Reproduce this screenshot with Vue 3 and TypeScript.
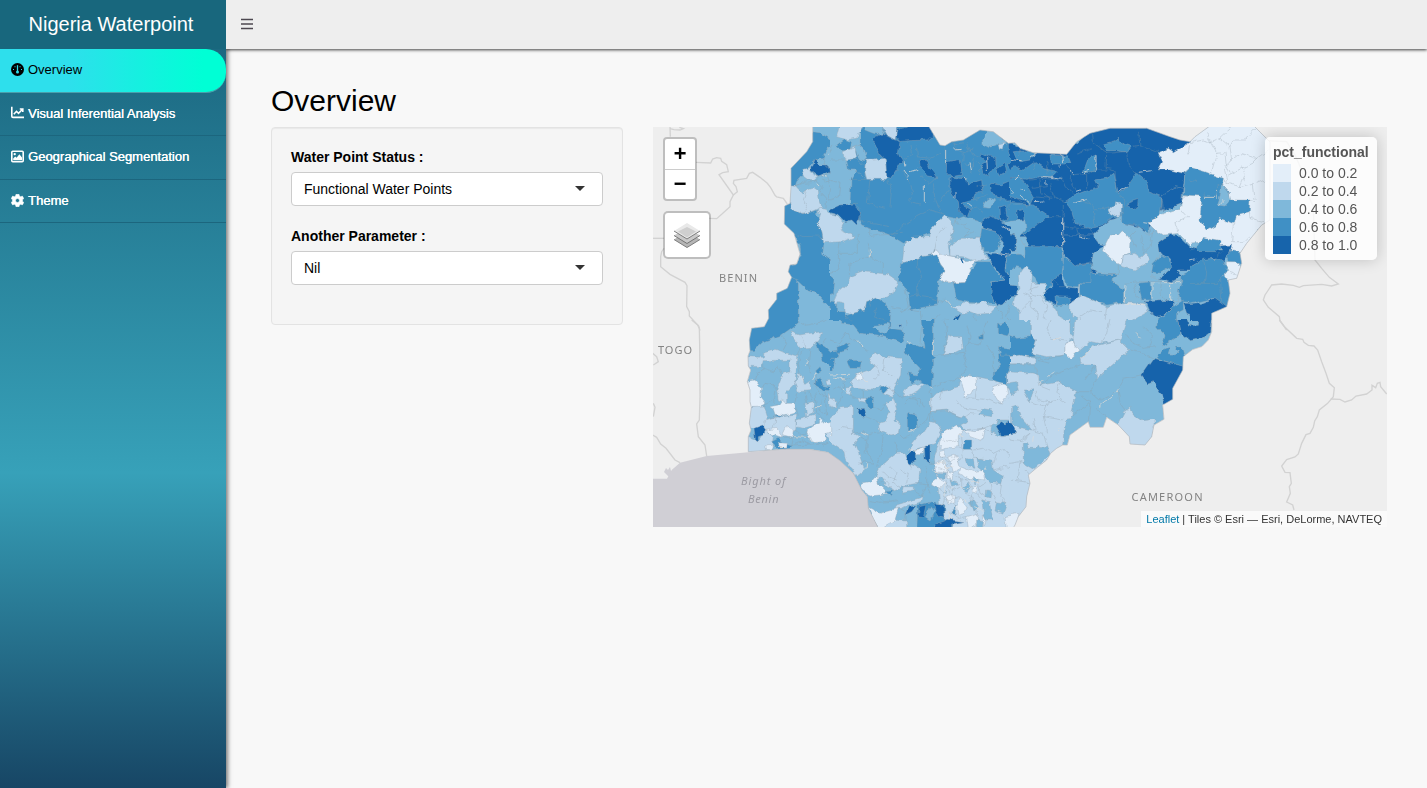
<script setup lang="ts">
type Sheet = { x: number; y: number; areas: string[]; seams: string[]; gaps: string[] }

const shades: string[] = ['#e3eef9', '#bfd8ed', '#7fb8da', '#4090c5', '#1764ab']
const classes: string[] = ['0.0 to 0.2', '0.2 to 0.4', '0.4 to 0.6', '0.6 to 0.8', '0.8 to 1.0']

/* Each map sheet has its own origin; units are thirds of a pixel.
   An area is "shade|points". */
const sheets: Sheet[] = [
  {
    x: 650, y: 120,
    areas: [
      '3|488,38 515,42 530,50 545,60 558,55 545,75 530,90 520,115 500,120 490,125 470,150 440,185 436,197 415,200 415,145 460,95 480,65',
      '1|555,45 580,40 580,60 556,62',
      '4|493,120 512,135 535,135 538,155 525,160 505,168 480,150',
      '1|462,148 480,143 485,160 503,168 492,180 472,178 455,165',
      '1|415,198 440,198 460,220 470,210 490,205 505,215 508,240 515,260 495,270 460,284 421,265',
      '1|505,262 525,265 540,280 580,290 580,365 520,368 515,330 500,310 510,300 515,280 502,275',
      '3|395,258 420,250 421,265 460,284 500,270 500,285 512,298 500,310 515,330 520,365 515,400 540,420 545,460 548,500 555,580 500,520 475,513 445,485 420,475 405,455 408,435 440,432 452,402 450,375 432,345 395,312',
      '4|538,275 550,264 580,264 580,290 555,285',
      '3|415,472 428,472 445,490 445,605 430,640 300,640 335,620 350,570 375,520',
      '1|558,510 580,500 580,545 555,580 548,545'
    ],
    seams: [
      '432,340 460,350 510,348 518,355', '436,197 460,185 480,180 500,182', '470,210 460,240 472,262 460,284',
      '500,182 520,200 512,215 530,235 528,262', '488,180 500,165 520,170 540,150', '520,115 530,140 550,145 570,120',
      '430,200 455,190 490,188 515,165 545,160', '530,170 540,200 535,230 548,260', '516,180 530,185 550,178 570,182',
      '540,420 560,415 570,410', '430,630 450,610 490,620', '555,580 570,590'
    ],
    gaps: ['500,188 512,200', '538,100 548,100', '516,165 528,172', '548,160 552,185']
  },
  {
    x: 830, y: 120,
    areas: [
      '3|90,10 580,10 580,310 455,310 350,290 300,340 220,370 180,345 95,315 60,250 63,178 80,150 50,120 60,90 90,75',
      '1|30,10 100,10 80,55 50,60 20,50',
      '3|20,75 40,60 65,68 60,90 35,92',
      '2|60,85 90,75 100,85 110,115 100,125 85,115 78,90',
      '1|40,95 75,82 80,110 60,125 42,115',
      '3|50,120 80,115 105,140 105,178 80,150 55,150',
      '2|100,10 150,10 165,45 130,40 105,30',
      '1|150,10 205,10 195,60 170,45',
      '1|107,120 130,120 165,115 172,170 165,178 110,178 104,150',
      '4|135,50 160,42 190,58 210,65 205,100 215,125 185,175 170,172 168,120 150,105 135,70 125,62',
      '4|200,30 215,25 298,10 312,45 295,60 240,62 210,65 197,50',
      '4|268,125 290,120 300,145 320,172 295,168 270,140',
      '4|350,125 390,118 397,165 365,170 349,155',
      '4|360,170 410,178 412,192 455,180 458,215 435,222 430,240 395,250 422,265 412,290 388,275 385,245 360,210',
      '2|455,70 470,30 495,30 530,70 508,78 505,70 475,80',
      '1|505,75 525,70 520,90 508,88',
      '4|535,65 580,70 580,110 545,118 535,95',
      '4|455,100 475,108 497,112 498,140 475,168 458,155 455,135 470,125 450,110',
      '4|500,145 525,130 530,155 508,168', '4|535,135 552,130 555,145 545,150',
      '4|480,190 510,195 545,180 580,175 580,235 530,240 500,235 485,215',
      '2|465,245 480,235 497,240 478,265 460,262',
      '4|510,260 525,255 533,300 512,305',
      '2|515,310 580,295 580,345 550,330',
      '4|0,275 30,255 75,252 92,290 80,315 65,300 45,305 25,285',
      '1|-5,280 20,285 40,310 30,330 75,350 40,365 -5,367',
      '1|345,283 365,305 370,325 355,380 360,408 320,405 310,385 305,405 260,415 228,438 218,420 222,375 245,352 300,350 300,330',
      '2|375,300 400,290 440,300 458,315 450,355 410,355 365,378 370,325',
      '1|360,378 395,355 450,355 455,390 475,415 435,425 400,410 360,408',
      '0|305,400 315,385 330,402 360,408 398,415 410,425 437,418 420,445 425,460 405,488 345,488 328,475 345,450 330,430',
      '4|395,415 401,415 399,432 395,428',
      '3|455,325 500,335 515,360 495,395 460,395 450,360',
      '3|530,405 580,400 580,490 545,480 527,450',
      '4|455,305 480,288 505,300 550,330 558,340 557,395 530,405 525,450 545,480 565,500 563,525 500,558 480,525 485,485 525,480 500,450 485,430 470,400 515,400 520,365 498,335 460,325',
      '3|215,430 275,410 320,402 332,435 345,450 325,480 322,555 290,560 240,570 235,515 205,480',
      '3|425,450 440,425 480,425 500,455 525,480 485,485 483,525 495,550 420,548 380,540 370,490 405,488',
      '3|0,455 12,480 8,520 0,530',
      '1|20,520 55,490 60,470 100,455 170,462 203,485 190,520 150,535 110,545 105,570 60,583 45,575 45,550 25,545 10,575 8,560',
      '1|370,565 400,550 440,552 470,542 475,555 500,560 480,580 440,583 420,575 395,580',
      '1|555,535 580,530 580,580 550,570',
      '3|110,545 140,533 165,550 182,575 180,640 60,640 40,590 60,583 105,570',
      '3|-5,545 20,548 20,575 45,575 45,590 60,612 -5,600',
      '4|380,585 390,583 375,612 368,608', '4|205,617 212,615 212,622 206,624',
      '3|275,605 310,600 310,640 280,640', '3|500,640 505,615 525,605 540,620 540,640'
    ],
    seams: [
      '120,178 112,250 130,255 165,265', '63,178 107,178', '172,178 185,210 180,260', '220,155 240,190 250,215 235,245 270,255',
      '270,165 300,190 320,172', '310,190 315,240 330,270', '345,80 347,125', '215,125 245,105 240,75', '260,80 262,110 300,115 330,100',
      '375,70 380,90 410,100 430,85', '400,100 398,125', '430,110 425,160', '440,200 470,195', '190,345 215,320 260,290 300,270 345,283',
      '85,255 90,300 125,310 180,320', '120,320 118,350 150,345 215,340', '30,365 25,410 30,450 0,460', '85,345 85,400 30,400',
      '120,410 160,430 160,460', '115,370 120,410 60,430 58,465', '320,490 350,485 380,490', '262,415 262,440 275,470 262,495 265,530',
      '235,530 262,525 295,530 320,540', '225,510 235,560 210,575', '320,545 345,540 370,560', '180,560 240,570 270,575',
      '270,570 275,605 310,600 330,580', '140,560 130,590 182,605', '45,590 60,600 110,610', '310,390 320,350 345,320',
      '330,602 360,600 390,630', '430,583 440,610 420,630', '500,560 520,580 510,610', '540,550 530,590 550,610',
      '405,320 420,330 400,350 440,335', '375,300 385,315 410,310', '330,245 355,210', '60,250 85,250', '0,120 40,120', '10,75 0,95',
      '120,560 125,540', '0,180 30,190 25,230 0,240', '415,270 440,260 460,275', '430,240 470,225', '540,240 535,270 570,275',
      '410,70 420,100 445,110', '440,125 455,140 445,165', '395,130 425,135', '350,60 375,75 400,68'
    ],
    gaps: ['283,192 283,248', '347,90 347,130', '225,150 235,165 232,180', '222,120 225,140', '118,388 118,412', '378,215 378,235', '515,320 545,335',
      '500,400 530,405', '400,175 412,178', '240,155 262,148', '545,210 548,218 562,214', '545,200 558,215', '350,540 372,565', '370,90 395,88', '470,110 472,150', '420,130 425,150', '415,250 430,262']
  },
  {
    x: 1010, y: 120,
    areas: [
      '4|0,60 30,80 170,95 240,30 300,10 410,10 500,50 540,55 525,160 515,250 455,270 415,330 380,350 245,465 200,435 160,380 60,385 45,350 0,350',
      '3|10,95 60,92 75,100 60,120 30,125 15,110',
      '3|15,140 40,150 75,125 100,145 140,155 125,170 90,170 50,178 0,170 0,155',
      '3|120,105 175,108 182,125 165,135 125,135',
      '3|0,180 30,170 50,195 70,230 60,255 40,240 0,225',
      '3|0,250 70,255 120,290 85,310 45,345 0,300',
      '4|20,270 40,265 42,300 22,300',
      '2|0,305 45,300 48,330 30,350 50,385 50,415 30,405 15,385 18,345 0,335',
      '4|0,340 18,345 15,390 0,395',
      '3|45,380 155,380 160,435 155,465 130,480 115,510 95,510 60,450 20,440 0,460 0,400 30,400 45,415',
      '3|160,410 200,438 247,430 247,465 240,490 210,488 205,500 175,500 160,465',
      '3|280,75 315,65 325,52 335,70 368,80 345,95 320,92 290,92',
      '3|220,155 235,115 258,105 258,155',
      '3|165,245 195,225 235,210 265,200 255,180 290,175 312,160 325,220 345,210 380,160 410,185 415,215 455,230 455,250 450,290 415,305 418,340 380,315 330,310 310,290 270,320 240,325 195,310 185,270',
      '4|355,245 385,235 383,260 370,270 352,260',
      '2|245,350 270,325 300,300 335,290 335,310 385,320 415,345 450,330 478,330 480,345 450,365 450,400 430,440 425,470 460,485 515,480 505,545 430,550 345,550 340,510 305,480 325,465 270,462 245,445',
      '1|293,265 318,258 320,245 335,250 333,290 320,292 300,280',
      '4|160,345 250,345 260,370 285,375 250,400 245,425 195,438 160,405',
      '0|285,375 300,345 325,345 337,332 360,360 358,400 340,405 335,435 318,430 280,395',
      '1|340,405 370,400 395,412 405,402 417,415 410,430 375,450 335,440',
      '0|455,95 475,85 490,95 540,65 580,25 580,150 545,140 520,160 480,150 445,150 458,125 445,100',
      '3|525,160 545,138 580,155 580,235 520,225',
      '4|455,225 500,200 518,205 515,250 460,272',
      '0|415,310 460,280 510,265 520,228 580,230 580,370 545,380 505,340 460,345 430,325',
      '4|445,370 480,345 510,350 545,385 580,390 580,420 555,450 500,450 515,470 485,485 445,475 480,450 485,420 450,400',
      '3|430,430 455,405 480,415 485,440 450,460 425,455',
      '3|515,465 545,450 580,445 580,550 515,545 505,510 515,485',
      '3|240,460 325,465 305,480 340,510 340,545 290,555 260,545 210,525 205,490 240,490',
      '3|385,490 420,485 425,540 395,540',
      '4|125,480 155,460 165,500 205,505 203,550 190,555 140,530 135,555 95,525 125,500',
      '3|135,530 180,532 182,555 138,557',
      '1|25,470 45,440 68,455 65,490 110,490 110,510 95,530 140,565 145,590 170,600 160,640 30,640 30,580 10,555 15,525 30,510',
      '4|0,490 22,495 20,525 0,530',
      '1|180,550 215,525 260,545 290,560 330,548 400,550 415,575 370,600 355,640 195,640 200,595 180,575',
      '4|405,545 490,540 490,560 465,585 440,590 415,570',
      '3|490,560 520,540 520,570 500,580 500,640 440,640 445,595 465,585',
      '4|520,550 580,550 580,640 510,640 530,600 565,605 560,590 530,580'
    ],
    seams: [
      '385,25 390,75 365,80', '248,40 250,70 290,100 350,95', '290,100 288,145 315,150 320,215', '350,95 355,135 380,158', '390,75 445,95',
      '200,100 245,85', '185,165 230,160 230,215', '155,170 165,200 190,220', '60,180 100,175 150,180', '90,180 95,220 120,240',
      '120,190 130,230 165,245', '65,205 110,200', '70,230 125,235', '110,165 115,120', '455,230 455,270',
      '160,255 158,410', '115,290 160,290', '160,320 200,325 240,325', '240,325 250,345', '200,325 205,345 240,360', '230,240 260,270 300,260',
      '250,270 255,320', '210,240 245,255', '325,220 350,205', '335,290 345,240 325,225', '385,320 360,345 380,385', '395,345 400,400',
      '430,325 420,380 400,400', '325,435 325,465', '345,490 385,485 425,485 515,485', '380,490 370,520 395,540', '455,485 450,520 470,545',
      '130,480 150,500 165,500', '40,520 65,530 60,560 85,580 80,620', '65,490 60,520 90,530', '90,530 110,560 100,590 120,630',
      '290,560 285,600 300,630', '215,630 210,590 240,570 275,575', '540,65 535,95 545,110', '510,265 530,290 545,290',
      '505,340 495,310 530,290', '530,100 550,110 570,100', '205,435 247,432', '55,510 85,500', '30,575 60,545',
      '30,85 25,110', '75,130 70,150', '165,135 185,150 180,180 195,210', '20,235 55,260', '235,165 250,150 290,150'
    ],
    gaps: ['346,553 402,553', '258,106 258,155', '426,488 426,536', '482,488 482,542', '158,292 158,345', '158,350 158,375', '208,490 206,522', '345,492 343,545', '190,250 230,238',
      '108,180 108,196', '220,155 240,148', '0,205 10,215 5,222', '15,180 30,165', '0,118 35,122', '155,100 158,130 150,140', '325,215 352,200', '385,157 425,152', '400,305 420,308', '205,350 235,358', '430,488 510,488', '35,205 48,215', '95,170 130,172', '72,245 100,243',
      '60,110 80,100', '180,150 190,165', '125,170 155,175', '30,225 60,250', '195,215 210,210']
  },
  {
    x: 1190, y: 120,
    areas: [
      '0|-5,60 60,10 210,10 250,70 250,300 215,320 170,375 150,405 125,395 60,365 -5,370',
      '3|-5,138 45,155 97,175 95,190 118,215 120,240 180,240 178,275 140,285 133,312 90,295 75,318 52,330 30,300 35,240 28,228 -5,225',
      '2|95,190 115,215 122,238 105,258 82,255 90,230',
      '4|-5,375 20,385 95,390 85,378 125,375 120,400 100,432 75,415 40,420 -5,450',
      '3|18,385 38,352 93,362 92,385 80,395 25,395',
      '3|122,392 165,400 155,433 118,425 112,410',
      '0|112,425 135,425 155,440 150,475 115,485 100,460 112,455',
      '3|-5,450 40,418 80,415 112,435 100,470 122,490 120,540 115,562 90,550 70,535 -5,555',
      '4|-5,555 35,550 75,533 115,562 70,578 70,640 -5,640',
      '2|-5,600 25,603 25,618 -5,618'
    ],
    seams: [
      '0,68 40,60 62,68 90,55 125,22', '62,68 80,100 65,155', '90,55 120,80 130,60 165,60 200,22', '120,80 125,120 105,140 115,190 95,175',
      '125,120 150,100 200,115 235,90', '115,190 150,200 190,190 195,240', '115,165 165,140 185,130 200,115', '150,200 165,165 155,140',
      '178,275 180,295 240,310', '130,312 125,365 160,365', '165,365 180,350', '40,418 50,460 45,490 0,490', '100,470 80,490 45,490',
      '95,545 92,480', '110,455 140,465', '0,180 20,185', '40,215 45,232 75,232 80,200 95,190', '62,68 50,40', '80,100 105,98 108,130 120,160',
      '180,240 195,245', '200,190 225,180', '75,415 95,395', '18,385 0,390'
    ],
    gaps: ['42,232 72,232', '85,258 100,240', '0,423 20,418', '80,210 78,240']
  },
  {
    x: 650, y: 320,
    areas: [
      '3|348,-10 445,-10 445,8 430,20 395,45 340,65 310,92 290,92 290,60 300,20 343,18',
      '1|420,35 450,45 515,35 505,60 485,82 450,85 435,60',
      '3|497,65 525,80 540,95 580,85 580,110 555,125 548,150 520,125',
      '1|285,110 340,112 342,95 375,88 440,108 440,135 435,190 410,215 410,250 385,240 380,210 400,160 420,155 420,120 340,122 335,140 285,138',
      '0|285,185 315,180 335,205 333,230 348,250 325,262 290,258',
      '1|290,260 340,258 350,290 345,320 320,330 290,320',
      '1|345,300 375,292 440,285 437,330 400,350 345,330',
      '1|285,345 325,362 345,330 370,350 365,385 340,400 285,400',
      '0|358,260 385,255 395,240 410,250 435,250 438,278 400,288 375,283 370,268',
      '3|370,285 392,286 385,292',
      '4|312,325 338,315 348,330 340,345 325,350 325,362 316,358',
      '0|345,332 380,325 395,345 395,352 365,342', '0|398,345 410,320 430,330 428,352',
      '1|440,300 495,285 495,315 460,325 440,320',
      '1|525,340 548,320 580,300 580,375 545,365',
      '0|470,335 490,320 505,310 512,295 528,310 545,305 545,335 525,340 530,360 500,365 480,360',
      '3|365,365 385,355 400,370 425,378 420,385 385,388', '0|385,368 412,370 410,382 388,380', '0|348,378 368,375 362,390 348,388',
      '1|435,190 445,160 460,170 465,190 480,180 482,212 445,215',
      '1|465,250 490,245 490,280 470,290',
      '3|495,185 510,175 520,200 545,205 545,212 520,210 495,195', '3|500,150 507,143 512,152 505,158',
      '1|528,180 580,175 580,190 530,195', '1|535,220 545,235 545,262 538,255'
    ],
    seams: [
      '445,0 470,15 500,10 530,0', '395,45 410,70 400,90', '440,108 450,85', '340,122 342,145 370,155 385,140 398,170', '335,205 345,190 370,195 385,215',
      '342,145 320,165 315,180', '455,95 445,130 450,165', '480,85 475,130 482,160', '500,160 495,200 515,225', '515,225 540,235 550,270',
      '440,220 435,250 445,290', '465,215 470,250', '495,220 500,280 520,295', '350,290 375,292', '375,292 370,325', '340,258 365,245',
      '435,330 455,345 470,335', '395,352 470,350 500,365', '425,378 480,375 540,370', '515,235 510,270 530,285', '525,215 530,290', '480,215 485,240',
      '455,50 465,80', '430,355 425,378 460,362 480,375', '500,365 520,378 545,365', '375,210 370,240 385,255', '530,55 520,70'
    ],
    gaps: ['475,120 467,138', '490,260 515,260', '548,163 570,163', '540,185 570,183', '500,155 485,180', '432,350 470,352', '388,380 410,380', '450,165 462,185']
  },
  {
    x: 830, y: 320,
    areas: [
      '3|35,-5 180,-5 180,25 215,30 225,60 215,68 140,45 90,40 70,15 35,10',
      '2|130,20 175,10 180,30 155,42', '4|204,16 212,14 210,22',
      '3|275,-5 310,-5 310,105 318,112 308,120 308,205 265,180 245,190 235,158 262,165 270,145 222,95 230,70 260,75 285,85 280,50',
      '1|355,45 365,50 395,50 400,85 370,100 340,105',
      '3|505,15 525,5 545,30 535,48 505,40', '3|448,50 460,46 460,58 450,58',
      '3|0,95 30,90 25,115 0,115', '3|20,85 60,70 50,90 25,98', '3|50,120 95,122 90,145 60,145', '3|0,115 15,115 10,150 0,150',
      '1|115,120 135,98 165,110 215,115 212,165 190,210 150,195 130,210 75,205 60,185 75,165 120,150 135,135',
      '0|72,170 90,160 100,172 85,182', '1|50,200 65,200 60,225 50,220', '1|80,235 108,235 108,250 85,245',
      '3|148,205 160,195 175,205 160,222', '1|160,222 178,205 195,210 185,232',
      '1|220,225 240,195 285,190 260,215 235,228',
      '3|108,235 130,235 130,262 115,265', '4|80,268 100,265 108,290 98,292',
      '1|35,260 70,258 70,340 90,350 75,370 85,395 100,440 105,450 80,470 50,425 45,395 -5,355 -5,310',
      '0|-5,315 5,320 5,345 -5,350', '1|0,230 15,240 20,262 5,265',
      '1|165,250 190,235 200,265 195,300 210,310 205,340 180,345 150,335 145,310 165,305 180,275',
      '3|232,280 260,285 262,325 232,333',
      '1|245,370 265,345 290,330 300,305 330,308 335,330 315,370 290,380 260,385 240,400',
      '4|228,410 245,395 257,395 255,425 240,432', '4|283,378 300,378 300,430 285,420', '0|258,390 282,380 280,402 258,405',
      '1|300,240 320,220 385,200 390,175 400,168 440,170 490,180 545,210 540,240 580,250 580,290 540,300 500,300 500,320 480,340 440,330 410,330 385,310 400,295 350,270 300,275',
      '0|388,175 405,165 438,170 440,205 405,232 400,205', '0|488,200 530,190 535,220 512,255 485,215',
      '2|530,190 550,185 568,195 565,220 545,222', '1|525,160 550,150 580,155 580,190 530,190', '1|538,115 580,108 580,132 545,130',
      '2|300,275 350,272 385,290 400,290 412,305 380,320 340,335 320,310', '2|455,265 488,270 485,290 450,285',
      '3|505,105 535,95 545,130 530,160 530,195 490,180 490,155 510,140', '3|505,80 512,105 580,108 580,75 540,85',
      '1|400,330 460,325 515,350 560,345 580,330 580,580 545,590 525,640 310,640 345,600 330,560 320,470 310,420 330,360 380,330',
      '2|540,290 570,270 580,300 570,330 545,305', '2|485,315 505,305 525,315 500,330 480,345',
      '4|498,318 515,308 525,315 538,302 560,330 555,345 515,348',
      '0|335,340 380,315 400,330 385,350 385,380 350,385 330,390', '0|400,330 435,335 465,325 455,362 420,350',
      '3|405,360 425,360 425,388 402,388', '0|312,430 335,422 355,440 350,460 318,455', '0|350,410 380,405 390,440 370,460 362,430',
      '0|300,490 325,470 345,490 330,505', '0|390,440 430,455 460,450 463,480 420,475 385,460', '0|330,395 348,390 345,410 328,412',
      '2|405,415 430,420 435,445 415,440', '2|440,415 485,420 490,450 520,470 515,488 480,485 450,450',
      '2|360,480 380,485 385,495 365,498', '2|395,505 415,490 425,500 410,520', '2|500,545 530,550 520,580 495,570', '2|455,540 478,545 488,600 465,600',
      '2|320,460 345,462 345,475 325,475', '2|340,515 350,512 348,522', '2|470,510 482,512 480,535 468,530',
      '1|150,440 200,400 225,398 235,430 270,445 265,490 235,495 190,510 150,490 135,470',
      '2|150,470 165,490 150,495 140,480', '0|90,490 120,485 138,465 145,490 175,520 150,525 120,528 95,510',
      '3|165,515 190,512 180,525', '1|200,555 280,530 275,545 225,560 195,570', '1|215,520 220,500 250,500 250,512',
      '0|115,562 150,580 205,565 195,600 155,640 135,610', '1|160,620 200,598 230,600 230,640 155,640',
      '3|260,555 310,545 345,555 345,600 370,605 365,640 260,640 262,590', '2|285,590 300,560 312,575 300,600',
      '4|225,585 235,560 258,558 245,575', '4|268,560 288,555 280,590 265,588', '4|312,552 340,552 345,595 325,590 315,575',
      '4|315,612 355,598 405,605 365,612 365,635 315,635', '3|365,580 378,555 375,585',
      '0|380,560 392,530 412,565 405,580 385,585', '0|410,590 445,580 445,610 415,625', '0|525,590 580,575 580,640 530,640',
      '0|350,530 370,520 375,545 358,550', '0|430,500 445,500 440,520 425,515',
      '2|415,545 430,540 445,560 430,575', '2|440,600 460,605 455,640 440,640', '2|430,470 445,478 435,492', '0|460,580 470,600 462,625', '0|350,455 372,462 365,478 348,472'
    ],
    seams: [
      '215,30 235,10 232,0', '285,85 270,70 275,20', '345,0 350,45 340,105', '310,105 345,105 400,100', '400,100 415,70 450,75 470,0',
      '400,100 410,140 390,170', '310,200 350,185 390,175', '470,75 490,100 490,155', '410,15 420,50 415,70', '0,60 30,70 45,40 90,75 115,95',
      '190,210 205,230 230,225', '165,110 160,150 190,170', '135,135 150,160 130,180', '70,340 100,335 115,345 150,335', '115,345 110,390 130,430',
      '90,350 110,360 105,400', '205,340 220,355 245,345', '160,345 155,390 140,440', '195,365 200,400', '300,210 305,240 298,300',
      '262,325 290,300 300,275', '340,205 330,240', '440,205 435,235 400,232', '435,235 480,240 512,255', '380,240 400,265 450,270',
      '400,295 420,280 450,285', '440,330 460,325 485,315', '130,262 150,270 165,250', '108,290 130,300 145,310', '240,235 260,240 270,260',
      '220,255 240,232 270,235 285,265', '430,390 460,385 490,400 520,385', '520,385 540,410 570,400', '490,450 530,440 570,450', '515,488 510,530 530,550',
      '480,485 485,520 500,545', '425,388 430,415 460,415', '385,380 402,388', '345,490 370,510 390,500', '370,510 365,540 392,530', '425,520 420,560 445,580',
      '330,505 345,530 335,560', '345,530 380,560', '385,460 395,480 420,475', '440,520 460,540', '410,520 430,530 425,560', '350,460 365,480', '315,440 345,450',
      '330,412 355,425 380,405', '362,430 345,440 355,455', '355,575 385,595 410,590', '300,430 312,430', '265,490 290,495 300,520', '250,512 280,530',
      '180,440 200,460 190,485 210,500', '160,455 175,470 200,480', '210,450 235,460 230,490', '145,490 165,480 190,510', '145,530 165,545 200,540',
      '120,545 150,550 205,545', '205,565 225,575 225,600', '290,440 290,500 275,530', '240,432 245,445', '85,430 105,425 130,430', '20,330 40,320 70,325',
      '10,210 30,200 35,230 20,260', '40,170 45,200 30,210', '100,210 100,235', '60,225 80,235', '35,180 60,175', '450,500 465,490', '500,400 490,430', '560,350 560,400',
      '395,350 400,400 385,425', '340,360 360,365 380,360', '375,470 410,480 430,500', '395,480 395,505', '445,480 450,520 470,530', '345,480 360,520'
    ],
    gaps: ['310,60 310,105', '80,65 100,78', '235,60 245,75', '300,200 310,205', '0,165 60,163', '10,175 45,180', '310,230 300,238', '235,390 282,388', '460,455 470,440',
      '345,490 345,530', '385,345 400,350', '232,335 262,328', '90,150 100,165', '355,570 362,600', '90,335 115,345', '540,120 565,122', '35,205 50,215', '320,430 345,425 350,445 375,440', '100,175 112,188',
      '355,510 370,505', '420,480 450,490', '390,500 410,510 430,498', '430,560 455,570', '400,535 410,545', '310,450 325,460', '110,430 108,450', '185,240 180,245']
  },
  {
    x: 1010, y: 320,
    areas: [
      '3|0,40 20,55 60,50 65,30 80,30 75,110 0,110',
      '1|60,-10 180,-10 180,35 190,55 165,70 165,105 110,110 65,100 80,60 62,40',
      '1|195,-10 355,-10 330,60 270,70 240,65 200,100 190,60',
      '0|165,70 190,60 195,80 210,90 180,118 165,95',
      '1|330,60 360,90 260,175 255,135 215,135 210,120 245,80',
      '1|0,112 30,105 75,115 75,130 0,132',
      '1|-5,150 50,152 85,165 95,195 150,185 198,215 185,285 165,310 158,375 170,385 122,410 85,450 80,640 -5,640',
      '2|-5,132 75,135 85,160 -5,155', '2|-5,190 20,185 25,215 -5,228', '2|40,210 70,210 60,245', '2|5,260 20,255 30,285 65,330 20,320 5,310',
      '4|-5,305 5,310 20,340 -5,342', '2|40,370 50,368 55,385 80,385 85,375 90,385 110,375 120,405 70,448 40,430',
      '0|-5,585 30,580 20,640 -5,640',
      '3|445,-10 500,-10 512,45 455,80 465,45 440,20', '4|500,-10 580,-10 580,60 545,65 510,35', '2|530,0 560,5 550,18 535,15',
      '3|440,115 465,85 480,82 475,100 495,105 505,95 495,82 515,80 530,135 518,140',
      '4|430,115 525,140 525,150 495,205 495,245 465,255 450,215 430,185 415,192 395,165',
      '1|345,270 362,260 370,285 395,302 435,298 435,335 405,380 355,378 350,350 318,325'
    ],
    seams: [
      '120,0 110,30 125,55 170,60', '300,0 290,40 270,70', '350,40 370,70 400,85 440,80', '400,20 430,50 420,80', '360,90 400,100 430,115',
      '95,195 130,165 210,135', '260,175 240,215 198,215', '255,135 225,180', '210,225 240,250 235,305', '240,215 270,240 325,215', '325,215 340,175 395,165',
      '255,265 290,290', '325,215 330,250 345,270', '185,285 210,270 240,250', '75,215 85,240 120,245 110,260 100,290', '100,290 160,300', '110,340 105,310 100,290',
      '50,240 75,250 110,260', '120,245 150,240 165,250', '150,185 140,215 155,240', '65,330 100,340 110,375', '30,360 60,340', '70,295 75,330',
      '30,420 25,480', '0,480 45,485 60,490', '0,430 30,425 45,430', '45,450 60,470', '80,155 90,195', '65,100 80,120 120,130', '375,35 390,50', '0,360 35,365 60,340', '120,210 95,200', '75,110 100,120 165,105'
    ],
    gaps: ['265,260 310,225', '378,40 392,55', '90,190 100,180', '115,170 130,158', '130,60 150,52', '70,350 68,365', '215,115 250,75', '318,220 330,205', '150,325 148,330']
  },
  {
    x: 1190, y: 320,
    areas: ['4|-5,-10 70,-10 62,35 35,55 -5,65', '2|-5,0 25,0 22,16 -5,18'],
    seams: ['-5,0 25,0', '35,55 55,42'],
    gaps: []
  }
]

/* Areas that touch a sheet's left or top edge run past it, so that no border is drawn there. */
const bleed = (n: string) => (Number(n) <= 0 ? '-14' : n)
const split = (s: string) => {
  const [shade, list] = s.split('|')
  const points = list.split(' ').map((p) => p.split(',').map(bleed).join(',')).join(' ')
  return { fill: shades[Number(shade)], points }
}

const outline =
  'M812.7,120V141.7L806.7,151.7 791,168.3V186.7L790,203.3 784.7,206 784.3,224 794,233.3 800,254 796.7,264 790,265 788.3,271.7 791.7,277.3 787.3,288.3 776.7,293.3V299.3L768.3,310 768.7,318.3 764.3,326.7 751.7,328.3 749.3,340 750,350.7 748,356 748.3,366 750.7,370 747.3,381.7 750,390V401.7L751.3,407.3 749.3,423.3 751,430 748.3,436.7V451.7L783,449.3H810L828,452.3 840,460.7 853.3,473.3 861.7,490 867.3,496.7 868.3,508.3 879.3,530H1012L1015,525 1018.3,516.7 1026,506.7 1026.7,496.7 1030,483.3 1028.3,475 1035,469.3 1046.7,460 1050.7,453.3 1056.7,448.3 1062.7,445H1067.3L1070,435 1088.3,421.7 1090,427.3H1103.3L1106.7,417.3 1118.3,425 1129.3,436.7 1130,444 1145,445 1151.7,436.7 1154,425 1164,419.3 1162.7,405 1172.7,399.3V388.3L1182.7,370 1183.3,356.7 1192.7,349.5 1202,346.5 1208.3,340 1211.7,331.7V313.3L1226.7,306.7 1230,293.3 1228.3,280 1236.7,278.3 1241.7,263.3 1240,253.3 1246.7,243.3 1261.7,225 1270,220V142L1255,127V120H1218L1195,136.7 1190,141.7 1180,140 1170,136.7 1146.7,128.3H1110L1090,133.3 1076.7,141.7 1066.7,154.3 1033.3,152.7 1020,148.3 1015,142.7 1008.3,143.3 993.3,131.7 980,130 963.3,140 951.7,141.7 945,145.7 940,145 929.3,127.3V120Z'

const borders: { x: number; y: number; lines: string[] }[] = [
  { x: 650, y: 120, lines: [
    '60,20 61,50', '60,26 72,29 90,30 100,26 88,22', '138,127 182,129 188,117 200,113 212,115 215,124 230,134 235,155 218,158 207,164 250,225 262,215 258,200 250,190 252,181 290,175 298,160 308,157 330,172 352,190 362,203 375,226 380,231 400,235 412,252',
    '250,225 240,245 240,260 215,283 200,296 178,295', '8,355 42,355', '42,385 35,395 32,410 32,440 60,463 105,487 111,497 110,560 118,575 118,588 146,618 150,632'] },
  { x: 650, y: 320, lines: [
    '125,0 143,15 148,25 149,75 150,230 148,300 140,312 145,350 165,375 170,408', '8,100 20,110 25,125 10,135', '8,345 20,352 32,372 48,385 75,420 90,428', '10,250 15,262 10,290'] },
  { x: 1190, y: 120, lines: [
    '232,62 290,65 315,105 335,150 345,205 370,260 375,420 395,445 418,472 445,492 425,498 395,493 340,497 328,502 310,496 275,492 245,495 235,510 225,525 220,540 235,562 268,590 270,602 290,630'] },
  { x: 1190, y: 320, lines: [
    '268,0 285,22 320,55 338,58 342,67 355,76 372,78 383,90 395,125 408,160 418,190 433,203 430,230 413,250 388,270 382,290 374,303 370,322 360,340 348,344 335,370 325,402 315,411 290,419 275,438 285,457 300,458 304,490 298,500 301,520 290,546 308,555 312,570',
    '422,237 450,238 465,246 485,240 498,228 530,222 546,210 546,196 557,203 562,190 570,187 572,200 590,222'] }
]

const params = [
  { label: 'Water Point Status :', value: 'Functional Water Points' },
  { label: 'Another Parameter :', value: 'Nil' }
]
</script>

<template>
  <div class="app">
    <aside class="sidebar">
      <div class="brand">Nigeria Waterpoint</div>
      <nav>
        <a class="item active">
          <svg viewBox="0 0 13 13"><circle cx="6.5" cy="6.5" r="6.5" fill="currentColor"/><path d="M6.5 2.2V8" stroke="#2edfec" stroke-width="1.3"/><circle cx="6.5" cy="9" r="1.5" fill="#2edfec"/><path d="M3.5 3.3h1v1h-1zM8.5 3.3h1v1h-1zM2 6h1v1H2zM10 6h1v1h-1z" fill="#2edfec"/></svg>
          <span>Overview</span>
        </a>
        <a class="item">
          <svg viewBox="0 0 13 13" fill="none" stroke="currentColor" stroke-width="1.6"><path d="M.8.8v9.4q0 1.200 1.200 1.200h11M2.800 8.200l2.700-2.900 2 2 3.800-3.800M8.800 3h3v3"/></svg>
          <span>Visual Inferential Analysis</span>
        </a>
        <a class="item">
          <svg viewBox="0 0 13 13"><rect x=".8" y="1.300" width="11.400" height="10.400" rx="1" fill="none" stroke="currentColor" stroke-width="1.600"/><circle cx="3.700" cy="4.100" r="1.200" fill="currentColor"/><path d="M2.200 10.200V8.500L4.200 6.600 5.600 7.800 8.400 4.200 11 7.500v2.700z" fill="currentColor"/></svg>
          <span>Geographical Segmentation</span>
        </a>
        <a class="item">
          <svg viewBox="0 0 13 13"><path fill="currentColor" fill-rule="evenodd" stroke="currentColor" stroke-width=".5" stroke-linejoin="round" d="M5 .2h3l.4 1.700 1.300.8 1.700-.6 1.400 2.500-1.300 1.200v1.400l1.300 1.200-1.400 2.500-1.700-.6-1.300.8L8 12.800H5l-.4-1.700-1.300-.8-1.700.6L.2 8.400l1.300-1.200V5.800L.2 4.600 1.600 2.100l1.700.6 1.300-.8zM6.500 4.500a2 2 0 1 0 0 4 2 2 0 1 0 0-4z"/></svg>
          <span>Theme</span>
        </a>
      </nav>
    </aside>

    <div class="page">
      <header class="topbar">
        <svg viewBox="0 0 12 12" stroke="#4d4850" stroke-width="1.700"><path d="M0 1.500h12M0 6h12M0 10.500h12"/></svg>
      </header>
      <main>
        <h2>Overview</h2>
        <div class="columns">
          <form class="well">
            <div v-for="p in params" :key="p.label" class="field">
              <label>{{ p.label }}</label>
              <div class="select"><span>{{ p.value }}</span><i></i></div>
            </div>
          </form>

          <section class="map">
            <svg class="canvas" viewBox="653 127 734 400">
              <defs>
                <clipPath id="country"><path :d="outline" /></clipPath>
                <clipPath id="upper"><rect width="540" height="600" /></clipPath>
                <clipPath id="lower"><rect width="540" height="640" /></clipPath>
                <filter id="survey" filterUnits="userSpaceOnUse" x="653" y="127" width="734" height="400">
                  <feTurbulence type="fractalNoise" baseFrequency=".16" numOctaves="2" seed="4" result="n" />
                  <feDisplacementMap in="SourceGraphic" in2="n" scale="5" xChannelSelector="R" yChannelSelector="G" />
                </filter>
              </defs>
              <rect x="653" y="127" width="734" height="400" fill="#eee" />
              <path fill="#d0cfd5" d="M653,478.700H667L671.700,470 680,462.700 706.700,456 748.300,452.300 783,449.300H810L828,452.300 875,456 900,530H653Z" />
              <path fill="#d0cfd5" d="M664,472l2-4 2 2 2-3 1 4 3 0-3 3 0 4-3-2z" />
              <g v-for="(b, i) in borders" :key="'b' + i" :transform="`translate(${b.x} ${b.y}) scale(.33333)`" class="border">
                <polyline v-for="(l, j) in b.lines" :key="j" :points="l" />
              </g>
              <g clip-path="url(#country)">
                <path :d="outline" :fill="shades[2]" />
                <g filter="url(#survey)">
                  <g v-for="(s, i) in sheets" :key="i" :transform="`translate(${s.x} ${s.y}) scale(.33333)`" :clip-path="s.y === 120 ? 'url(#upper)' : 'url(#lower)'">
                    <polygon v-for="(a, j) in s.areas" :key="'a' + j" v-bind="split(a)" class="area" />
                    <polyline v-for="(l, j) in s.seams" :key="'s' + j" :points="l" class="seam" />
                    <polyline v-for="(l, j) in s.gaps" :key="'g' + j" :points="l" class="gap" />
                  </g>
                </g>
              </g>
              <path :d="outline" fill="none" stroke="#b9bcc0" stroke-width=".7" />
              <g class="places">
                <text x="719" y="282" textLength="38">BENIN</text>
                <text x="658" y="354" textLength="34">TOGO</text>
                <text x="1131.500" y="501" textLength="71">CAMEROON</text>
                <text x="741" y="485" textLength="44.500" class="water">Bight of</text>
                <text x="748" y="503" textLength="30.500" class="water">Benin</text>
              </g>
            </svg>
            <div class="controls">
              <div class="zoom"><b>+</b><b>−</b></div>
              <div class="layers">
                <svg viewBox="0 0 26 26">
                  <path d="M0 17.500 13 9.500l13 8L13 25.500z" fill="#b5b5b5"/><path d="M0 17.500l13 8 13-8" fill="none" stroke="#7c7c7c" stroke-width="1"/>
                  <path d="M0 13.500 13 5.500l13 8-13 8z" fill="#c9c9c9"/><path d="M0 13.500l13 8 13-8" fill="none" stroke="#747474" stroke-width="1"/>
                  <path d="M0 9 13 1l13 8-13 8z" fill="#e9e9e9"/><path d="M4 9.500 13 5l9 4.500-9 6z" fill="#cfcfcf"/><path d="M0 9l13 8 13-8" fill="none" stroke="#7d7d7d" stroke-width="1"/>
                </svg>
              </div>
            </div>
            <div class="legend">
              <strong>pct_functional</strong>
              <div v-for="(c, i) in classes" :key="c" class="row"><i :style="{ background: shades[i] }"></i>{{ c }}</div>
            </div>
            <div class="credit"><a>Leaflet</a> | Tiles © Esri — Esri, DeLorme, NAVTEQ</div>
          </section>
        </div>
      </main>
    </div>
  </div>
</template>

<style>
body { margin: 0; overflow: hidden; }
</style>

<style scoped>
* { box-sizing: border-box; }
.app { display: flex; width: 1427px; height: 788px; background: #f8f8f8; color: #000; font: 14px/20px "Liberation Sans", Arial, sans-serif; }
.sidebar { z-index: 2; flex: none; width: 226px; background: linear-gradient(#19627b 0%, #37a1b9 60%, #174665 100%); box-shadow: 2px 0 4px rgba(0, 0, 0, .5); }
.brand { height: 49px; padding-right: 4px; background: #18677d; color: #fff; font-size: 20px; line-height: 48px; text-align: center; }
.item { display: flex; align-items: center; gap: 4px; height: 43.600px; padding: 0 0 0 11px; border-bottom: 1px solid #1c667e; color: #fff; font-size: 13px; line-height: 18px; text-shadow: .3px 0 #fff; }
.item svg { width: 13px; height: 13px; margin-top: -2px; }
.active { border-radius: 0 20px 20px 0; border-bottom-color: #4a9fac; background: linear-gradient(90deg, #2edfec 0%, #2edfec 30%, #00ffd5 90%); color: #000; text-shadow: none; }
.page { flex: 1; }
.topbar { position: relative; z-index: 3; display: flex; align-items: center; height: 49px; padding: 0 0 2px 15px; background: #eee; box-shadow: 0 1px 3px rgba(0, 0, 0, .75); clip-path: inset(0 0 -6px 0); }
.topbar svg { width: 12px; height: 12px; }
main { padding: 35px 40px 0 45px; }
h2 { margin: 0 0 10px; font-size: 30px; font-weight: 400; line-height: 33px; }
.columns { display: flex; gap: 30px; }
.well { width: 352px; height: 198px; padding: 19px; border: 1px solid #e3e3e3; border-radius: 4px; background: #f5f5f5; box-shadow: inset 0 1px 1px rgba(0, 0, 0, .05); }
.field { margin-bottom: 20px; }
label { display: block; margin-bottom: 5px; font-weight: 700; }
.select { display: flex; align-items: center; justify-content: space-between; height: 34px; padding: 0 17px 0 12px; border: 1px solid #ccc; border-radius: 4px; background: #fff; }
.select i { margin-top: -2px; border: 5px solid transparent; border-top-color: #333; border-bottom: 0; }
.map { position: relative; width: 734px; height: 400px; overflow: hidden; font-size: 12px; }
.canvas { display: block; width: 734px; height: 400px; }
.border { fill: none; stroke: #d2d2d2; stroke-width: 4; }
.area { stroke: #9aa9b6; stroke-width: 1.200; stroke-linejoin: round; }
.seam { fill: none; stroke: #8d9aa5; stroke-width: 1.400; opacity: .65; }
.gap { fill: none; stroke: #dfdcd7; stroke-width: 2.200; }
.places { fill: #838383; font: 11px "Noto Sans", "Open Sans", sans-serif; }
.water { fill: #9c9ba3; font-style: italic; }
.controls { position: absolute; left: 10px; top: 10px; }
.zoom { width: 34px; height: 64px; border: 2px solid rgba(0, 0, 0, .2); border-radius: 4px; background: #fff; background-clip: padding-box; }
.zoom b { display: block; height: 29px; color: #000; font: 700 22px/31px "Liberation Mono", monospace; text-align: center; }
.zoom b:first-child { height: 31px; border-bottom: 1px solid #ccc; line-height: 34px; }
.layers { display: flex; align-items: center; justify-content: center; width: 48px; height: 48px; margin-top: 10px; border: 2px solid rgba(0, 0, 0, .2); border-radius: 5px; background: #fff; background-clip: padding-box; }
.layers svg { width: 26px; height: 26px; }
.legend { position: absolute; right: 10px; top: 10px; width: 112px; height: 123px; padding: 6px 8px; border-radius: 5px; background: rgba(255, 255, 255, .8); box-shadow: 0 0 15px rgba(0, 0, 0, .2); color: #555; font-size: 14px; line-height: 18px; }
.legend strong { display: block; height: 21px; }
.row { display: flex; gap: 8px; height: 18px; }
.row i { width: 18px; height: 18px; }
.credit { position: absolute; right: 0; bottom: 0; padding: 0 5px; background: rgba(255, 255, 255, .7); color: #333; font-size: 11px; line-height: 16px; white-space: nowrap; }
.credit a { color: #0078a8; }
</style>
